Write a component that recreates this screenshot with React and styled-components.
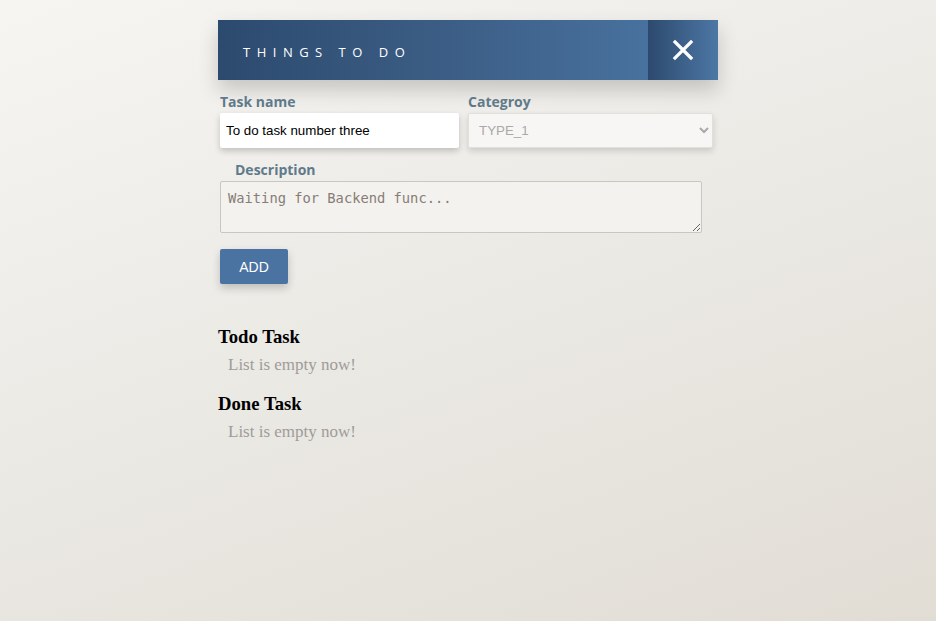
import React from "react";
import styled, { createGlobalStyle } from "styled-components";

const Global = createGlobalStyle`
  html, body { margin: 0; padding: 0; }
  body {
    min-height: 621px;
    background: linear-gradient(160deg, #f6f5f2 0%, #ebe9e4 50%, #e1ddd5 100%);
    font-family: "Open Sans", sans-serif;
  }
`;

const Wrap = styled.div`
  width: 500px;
  margin: 20px auto 0;
`;

const Header = styled.header`
  display: flex;
  height: 60px;
  background: linear-gradient(90deg, #2c4a6e 0%, #3a5b82 40%, #4c78a6 100%);
  box-shadow: 0 10px 20px rgba(0, 0, 0, 0.18);
`;

const Title = styled.h1`
  flex: 1;
  margin: 0;
  padding: 3px 0 0 25px;
  display: flex;
  align-items: center;
  font-family: "Open Sans", sans-serif;
  font-weight: 400;
  font-size: 13px;
  letter-spacing: 6.5px;
  color: #fff;
`;

const CloseBtn = styled.button`
  width: 70px;
  border: 0;
  padding: 0;
  display: flex;
  align-items: center;
  justify-content: center;
  background: linear-gradient(90deg, #2d4a6e 0%, #4c77a5 100%);
  cursor: pointer;
`;

const Form = styled.form`
  padding-top: 12px;
`;

const Row = styled.div`
  display: flex;
`;

const Field = styled.div`
  display: flex;
  flex-direction: column;
  width: ${(p) => p.$w}px;
  margin-left: ${(p) => p.$ml || 0}px;
`;

const Label = styled.label`
  font-family: "Open Sans", sans-serif;
  font-weight: 700;
  font-size: 14px;
  line-height: 19px;
  color: #5f7a8a;
  padding-left: ${(p) => p.$indent || 0}px;
`;

const Input = styled.input`
  box-sizing: border-box;
  margin-top: 2px;
  height: 35px;
  border: 0;
  border-radius: 2px;
  background: #fff;
  padding: 0 6px;
  font-family: "Liberation Sans", Arial, sans-serif;
  font-size: 13.33px;
  color: #000;
  box-shadow: 0 3px 6px rgba(0, 0, 0, 0.2);
  outline: none;
`;

const Select = styled.select`
  box-sizing: border-box;
  margin-top: 2px;
  height: 35px;
  border: 1px solid #e2e0dc;
  border-radius: 2px;
  background: #f7f6f4;
  padding: 0 6px;
  font-family: "Liberation Sans", Arial, sans-serif;
  font-size: 13.33px;
  color: #a9a9a9;
  box-shadow: 0 3px 6px rgba(0, 0, 0, 0.15);
  outline: none;
`;

const DescBlock = styled.div`
  margin-top: 12px;
  margin-left: 2px;
  display: flex;
  flex-direction: column;
  width: 482px;
`;

const TextArea = styled.textarea`
  box-sizing: border-box;
  margin-top: 2px;
  height: 52px;
  border: 1px solid #c9c7c3;
  border-radius: 2px;
  background: #f3f2ef;
  padding: 7px 7px 5px;
  font-family: "DejaVu Sans Mono", monospace;
  font-size: 13.75px;
  line-height: 19px;
  outline: none;
  &::placeholder {
    color: #867d76;
  }
`;

const AddButton = styled.button`
  margin: 16px 0 0 2px;
  width: 68px;
  height: 35px;
  border: 0;
  border-radius: 2px;
  background: #4a73a1;
  color: #fff;
  font-family: "Liberation Sans", Arial, sans-serif;
  font-size: 14px;
  box-shadow: 0 4px 8px rgba(0, 0, 0, 0.2);
  cursor: pointer;
`;

const Section = styled.section`
  margin-top: ${(p) => p.$mt}px;
`;

const SectionTitle = styled.h3`
  margin: 0;
  font-family: "Liberation Serif", "Times New Roman", serif;
  font-weight: 700;
  font-size: 18.72px;
  line-height: 22px;
  color: #000;
`;

const Empty = styled.p`
  margin: 8px 0 0 10px;
  font-family: "Liberation Serif", "Times New Roman", serif;
  font-size: 17px;
  line-height: 18px;
  color: #9e9c9a;
`;

export default function App() {
  return (
    <>
      <Global />
      <Wrap>
        <Header>
          <Title>THINGS TO DO</Title>
          <CloseBtn aria-label="close">
            <svg width="22" height="22" viewBox="0 0 22 22">
              <path d="M3 3 L19 19 M19 3 L3 19" stroke="#fff" strokeWidth="3.2" strokeLinecap="square" />
            </svg>
          </CloseBtn>
        </Header>
        <Form onSubmit={(e) => e.preventDefault()}>
          <Row>
            <Field $w={239} $ml={2}>
              <Label>Task name</Label>
              <Input defaultValue="To do task number three" />
            </Field>
            <Field $w={245} $ml={9}>
              <Label>Categroy</Label>
              <Select defaultValue="TYPE_1">
                <option>TYPE_1</option>
                <option>TYPE_2</option>
              </Select>
            </Field>
          </Row>
          <DescBlock>
            <Label $indent={15}>Description</Label>
            <TextArea placeholder="Waiting for Backend func..." />
          </DescBlock>
          <AddButton type="submit">ADD</AddButton>
        </Form>
        <Section $mt={42}>
          <SectionTitle>Todo Task</SectionTitle>
          <Empty>List is empty now!</Empty>
        </Section>
        <Section $mt={19}>
          <SectionTitle>Done Task</SectionTitle>
          <Empty>List is empty now!</Empty>
        </Section>
      </Wrap>
    </>
  );
}
